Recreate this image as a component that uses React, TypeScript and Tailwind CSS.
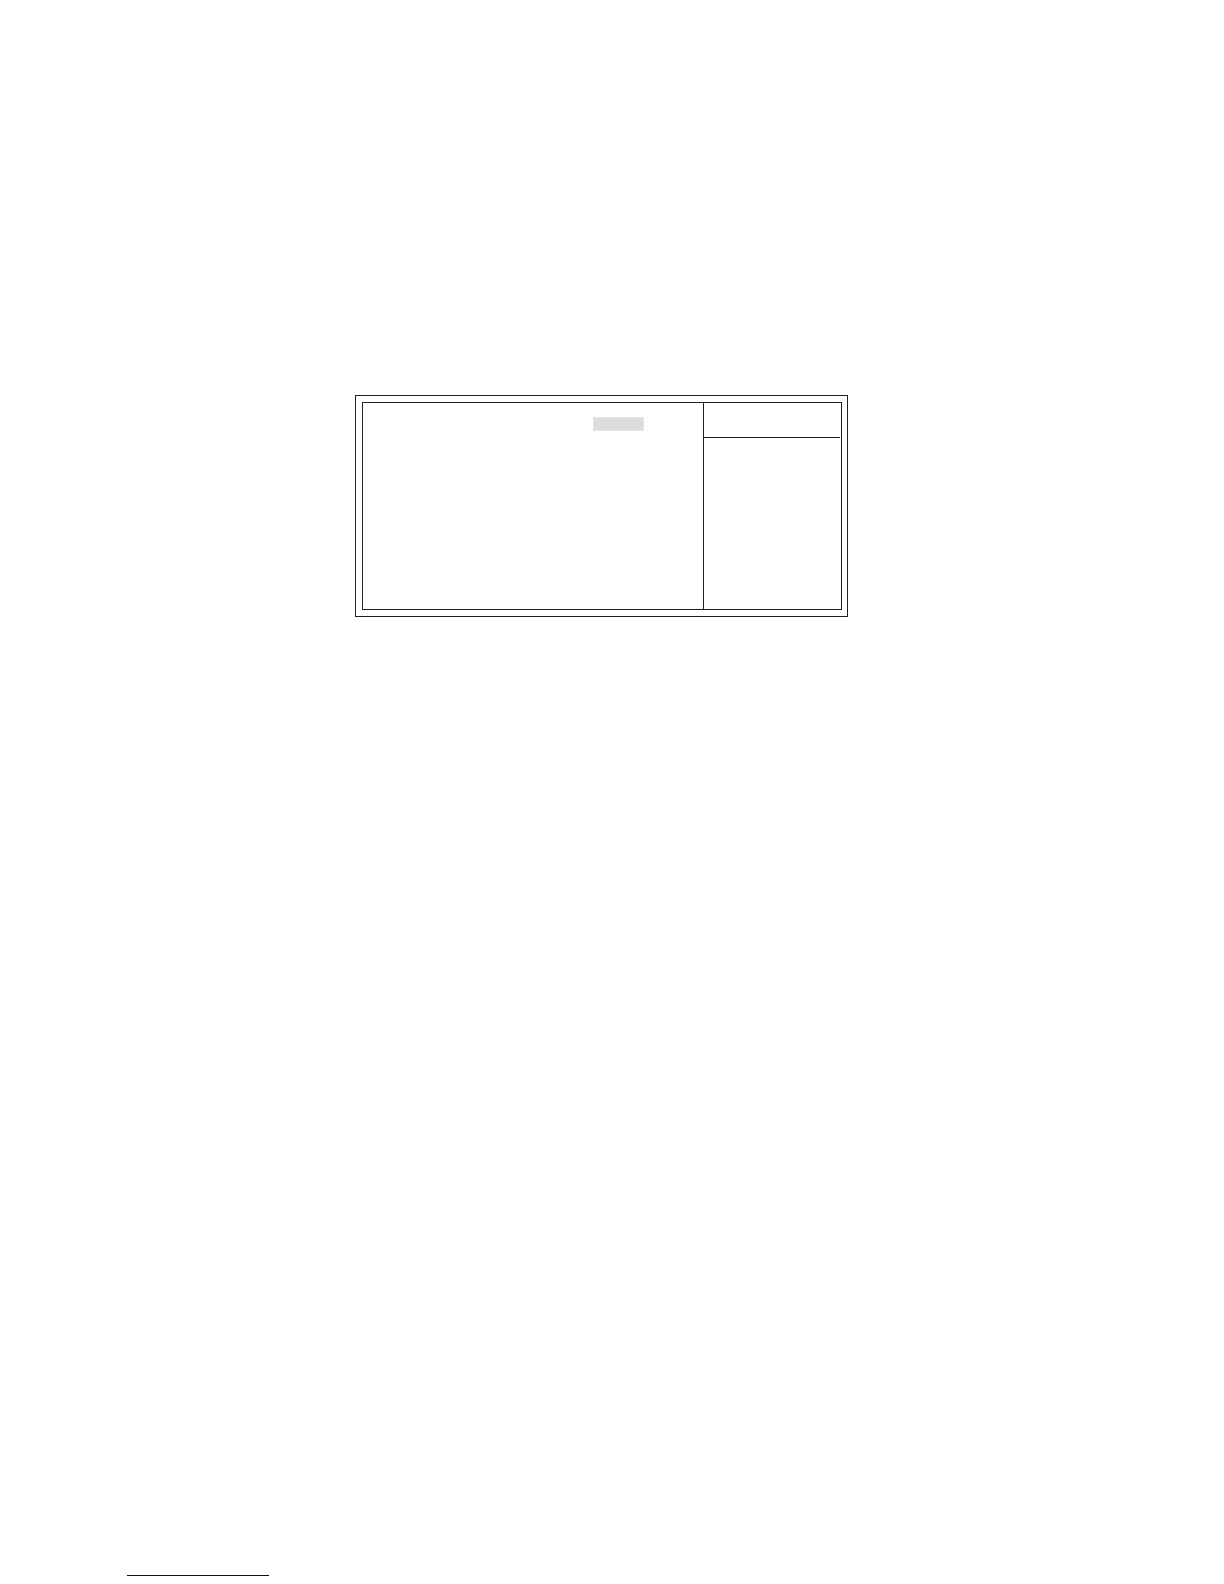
export const SetupPanel = () => {
  return (
    <section className="border border-[#231f20] py-1.5 pl-1.5 pr-[5px]">
      <div className="flex border border-[#231f20]">
        {/* Options area with the selected value highlighted */}
        <div className="flex h-[206px] flex-1 items-start justify-end pt-3.5 pr-[59px]">
          <div className="h-3.5 w-[51px] border border-[#e4e5e6] bg-[#dcddde]" />
        </div>

        {/* Help column */}
        <aside className="w-[138px] border-l border-[#231f20] pr-px">
          <div className="h-[35px] border-b border-[#231f20]" />
        </aside>
      </div>
    </section>
  );
};

export default function App() {
  return (
    <div className="flex min-h-screen flex-col justify-between bg-white pt-[395px] pb-2">
      <main className="pl-[355px] pr-[376px]">
        <SetupPanel />
      </main>

      {/* Footer rule */}
      <footer className="pl-[127px]">
        <div className="w-[142px] border-b border-[#000080]" />
      </footer>
    </div>
  );
}
